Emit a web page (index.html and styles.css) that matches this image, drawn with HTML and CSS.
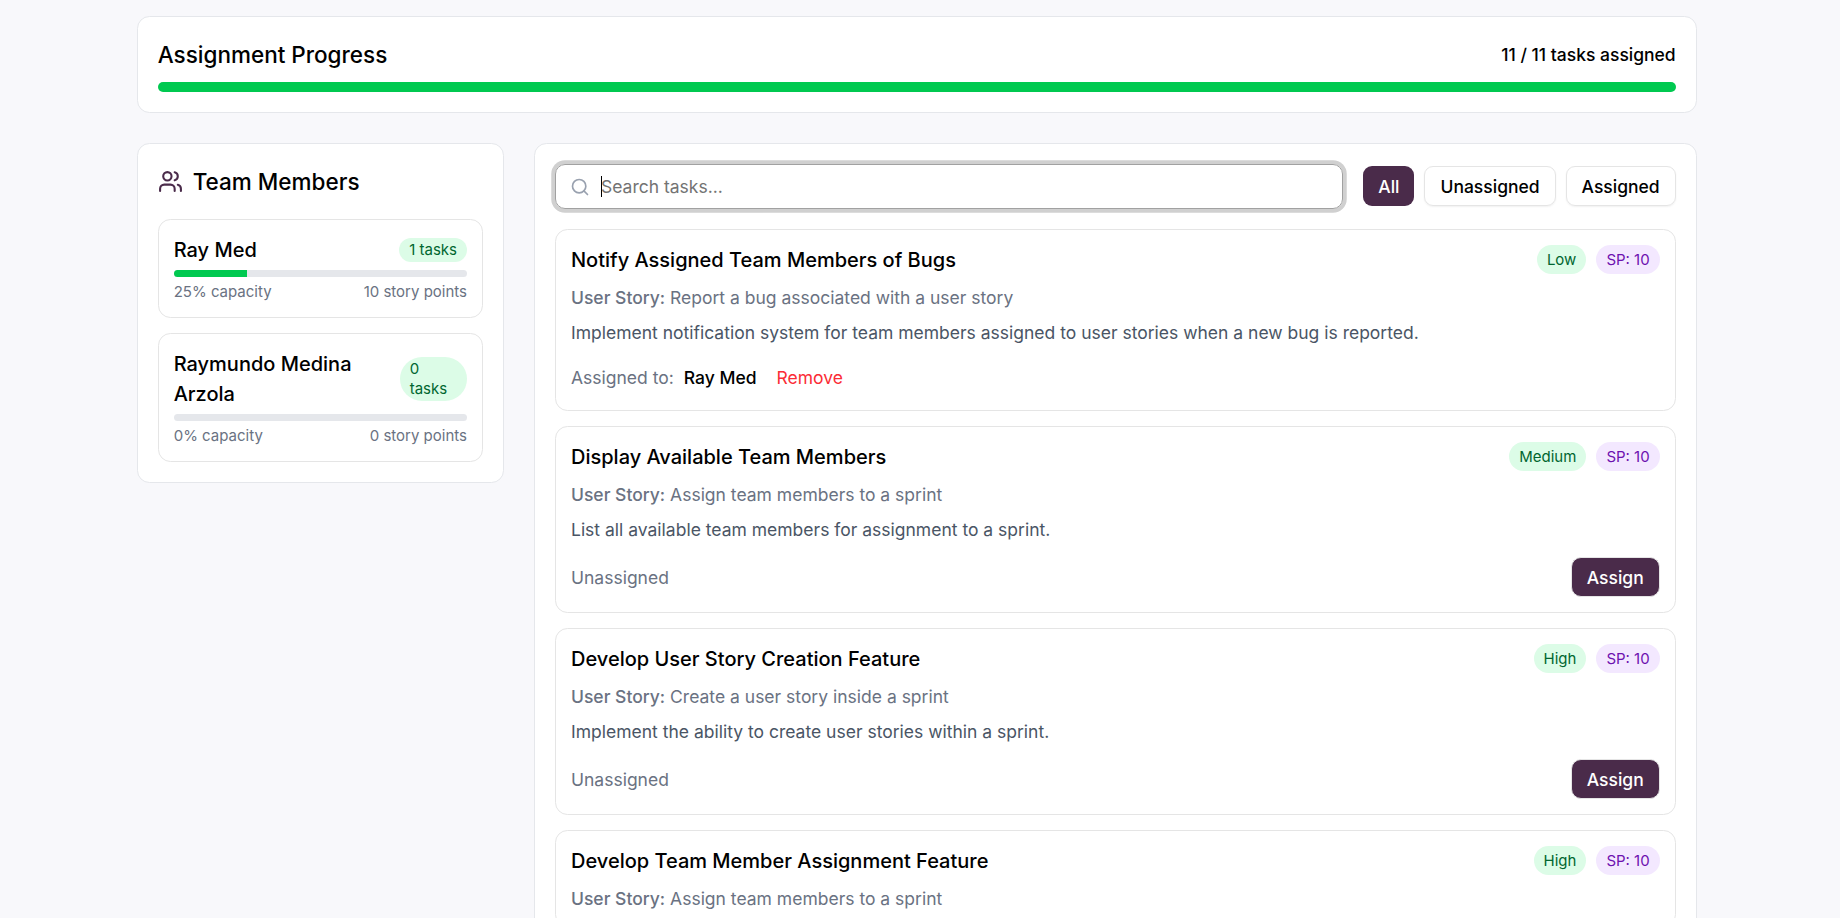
FILE: index.html
```
<!DOCTYPE html>
<html lang="en">
<head>
<meta charset="utf-8">
<title>Task Assignment</title>
<link rel="stylesheet" href="styles.css">
</head>
<body>
<main class="page">
  <section class="card progress">
    <div class="row">
      <h2 class="heading">Assignment Progress</h2>
      <span class="count">11 / 11 tasks assigned</span>
    </div>
    <div class="bar bar-lg"><div class="fill" style="width:100%"></div></div>
  </section>

  <div class="columns">
    <aside class="card team">
      <h2 class="heading team-heading">
        <svg class="users" viewBox="0 0 24 24"><path d="M16 21v-2a4 4 0 0 0-4-4H6a4 4 0 0 0-4 4v2"/><circle cx="9" cy="7" r="4"/><path d="M22 21v-2a4 4 0 0 0-3-3.87"/><path d="M16 3.13a4 4 0 0 1 0 7.75"/></svg>
        Team Members
      </h2>
      <div class="members">
        <div class="member">
          <div class="row"><h3 class="name">Ray Med</h3><span class="badge small green">1 tasks</span></div>
          <div class="bar"><div class="fill" style="width:25%"></div></div>
          <div class="row caption"><span>25% capacity</span><span>10 story points</span></div>
        </div>
        <div class="member">
          <div class="row"><h3 class="name">Raymundo Medina Arzola</h3><span class="badge small green">0 tasks</span></div>
          <div class="bar"></div>
          <div class="row caption"><span>0% capacity</span><span>0 story points</span></div>
        </div>
      </div>
    </aside>

    <section class="card tasks">
      <div class="toolbar">
        <div class="search">
          <svg class="glass" viewBox="0 0 24 24"><circle cx="11" cy="11" r="8"/><path d="m21 21-4.3-4.3"/></svg>
          <span class="caret"></span><span class="placeholder">Search tasks...</span>
        </div>
        <div class="filters">
          <button class="btn primary">All</button>
          <button class="btn outline">Unassigned</button>
          <button class="btn outline">Assigned</button>
        </div>
      </div>

      <div class="list">
        <article class="task">
          <div class="row"><h3 class="name">Notify Assigned Team Members of Bugs</h3><div class="badges"><span class="badge green">Low</span><span class="badge purple">SP: 10</span></div></div>
          <p class="story"><b>User Story:</b> Report a bug associated with a user story</p>
          <p class="desc">Implement notification system for team members assigned to user stories when a new bug is reported.</p>
          <div class="assigned"><span>Assigned to:</span><span class="who">Ray Med</span><button class="remove">Remove</button></div>
        </article>
        <article class="task">
          <div class="row"><h3 class="name">Display Available Team Members</h3><div class="badges"><span class="badge green">Medium</span><span class="badge purple">SP: 10</span></div></div>
          <p class="story"><b>User Story:</b> Assign team members to a sprint</p>
          <p class="desc">List all available team members for assignment to a sprint.</p>
          <div class="row foot"><span>Unassigned</span><button class="btn primary assign">Assign</button></div>
        </article>
        <article class="task">
          <div class="row"><h3 class="name">Develop User Story Creation Feature</h3><div class="badges"><span class="badge green">High</span><span class="badge purple">SP: 10</span></div></div>
          <p class="story"><b>User Story:</b> Create a user story inside a sprint</p>
          <p class="desc">Implement the ability to create user stories within a sprint.</p>
          <div class="row foot"><span>Unassigned</span><button class="btn primary assign">Assign</button></div>
        </article>
        <article class="task">
          <div class="row"><h3 class="name">Develop Team Member Assignment Feature</h3><div class="badges"><span class="badge green">High</span><span class="badge purple">SP: 10</span></div></div>
          <p class="story"><b>User Story:</b> Assign team members to a sprint</p>
        </article>
      </div>
    </section>
  </div>
</main>
</body>
</html>
```
FILE: styles.css
```
* { box-sizing: border-box; }
html { height: 100%; overflow: hidden; }
body {
  margin: 0;
  height: 100%;
  overflow: hidden;
  background: #f8f8fb;
  color: #000;
  font: 17.5px/25px Inter, "Liberation Sans", sans-serif;
}
h2, h3, p { margin: 0; }
button { font: inherit; background: none; border: 0; margin: 0; }

.page { width: 1560px; margin-left: 136.7px; padding-top: 16px; }
.card { background: #fff; border: 1px solid #e5e7eb; border-radius: 12.5px; padding: 20px; }
.row { display: flex; align-items: center; justify-content: space-between; }
.heading { font-size: 22.5px; line-height: 35px; font-weight: 500; }
.count { font-weight: 500; }

.bar { height: 7px; margin-top: 5px; border-radius: 5px; background: #e5e7eb; overflow: hidden; }
.bar-lg { height: 10px; margin-top: 10px; }
.fill { height: 100%; background: #00c950; }

.columns { display: grid; grid-template-columns: 367.3px 1fr; gap: 30px; margin-top: 30px; align-items: start; }

.team-heading { display: flex; align-items: center; gap: 10px; margin-bottom: 20px; }
.users { width: 25px; height: 25px; }
.users, .glass { fill: none; stroke: #4a2b4a; stroke-width: 2; stroke-linecap: round; stroke-linejoin: round; flex: none; }
.members, .list { display: flex; flex-direction: column; gap: 15px; }
.member, .task { border: 1px solid #e5e5e5; border-radius: 12.5px; padding: 15px; }
.name { font-size: 20px; line-height: 30px; font-weight: 500; }
.caption { margin-top: 5px; font-size: 15px; line-height: 20px; color: #6a7282; }

.badge { padding: 4.5px 10px; border-radius: 20px; font-size: 15px; line-height: 20px; }
.small { padding: 2.3px 10px; border-radius: 23px; margin-bottom: .4px; }
.green { background: #dcfce7; color: #016630; }
.purple { background: #f3e8ff; color: #6e11b0; }
.badges { display: flex; gap: 10px; align-self: flex-start; }

.toolbar { display: flex; align-items: flex-start; gap: 20px; margin-bottom: 20px; }
.search {
  flex: 1;
  display: flex;
  align-items: center;
  height: 45px;
  padding-left: 14px;
  border: 1px solid #a1a1a1;
  border-radius: 10px;
  box-shadow: 0 0 0 3.75px #d0d0d0;
}
.glass { width: 20px; height: 20px; stroke: #99a1af; }
.caret { position: relative; z-index: 1; width: 1px; height: 21px; margin-left: 10.7px; margin-right: -.7px; background: #000; }
.placeholder { color: #737373; }
.filters { display: flex; gap: 10px; margin-top: 2px; }
.btn { height: 40px; padding: 0 15px; border-radius: 9px; font-weight: 500; }
.primary { background: #4a2b4a; color: #fff; }
.outline { border: 1px solid #e5e5e5; box-shadow: 0 1px 2px rgba(0, 0, 0, .06); color: #000; }

.story { margin-top: 10px; color: #6a7282; }
.story b { font-weight: 500; }
.desc { margin-top: 10px; color: #4a5565; }
.assigned { display: flex; align-items: center; height: 35px; margin-top: 15px; gap: 10px; color: #6a7282; }
.who { color: #000; font-weight: 500; }
.remove { padding: 0 10px; color: #fb2c36; }
.foot { margin-top: 15px; color: #6a7282; }
.assign { border: 1px solid #e5e5e5; border-radius: 10px; }
```
